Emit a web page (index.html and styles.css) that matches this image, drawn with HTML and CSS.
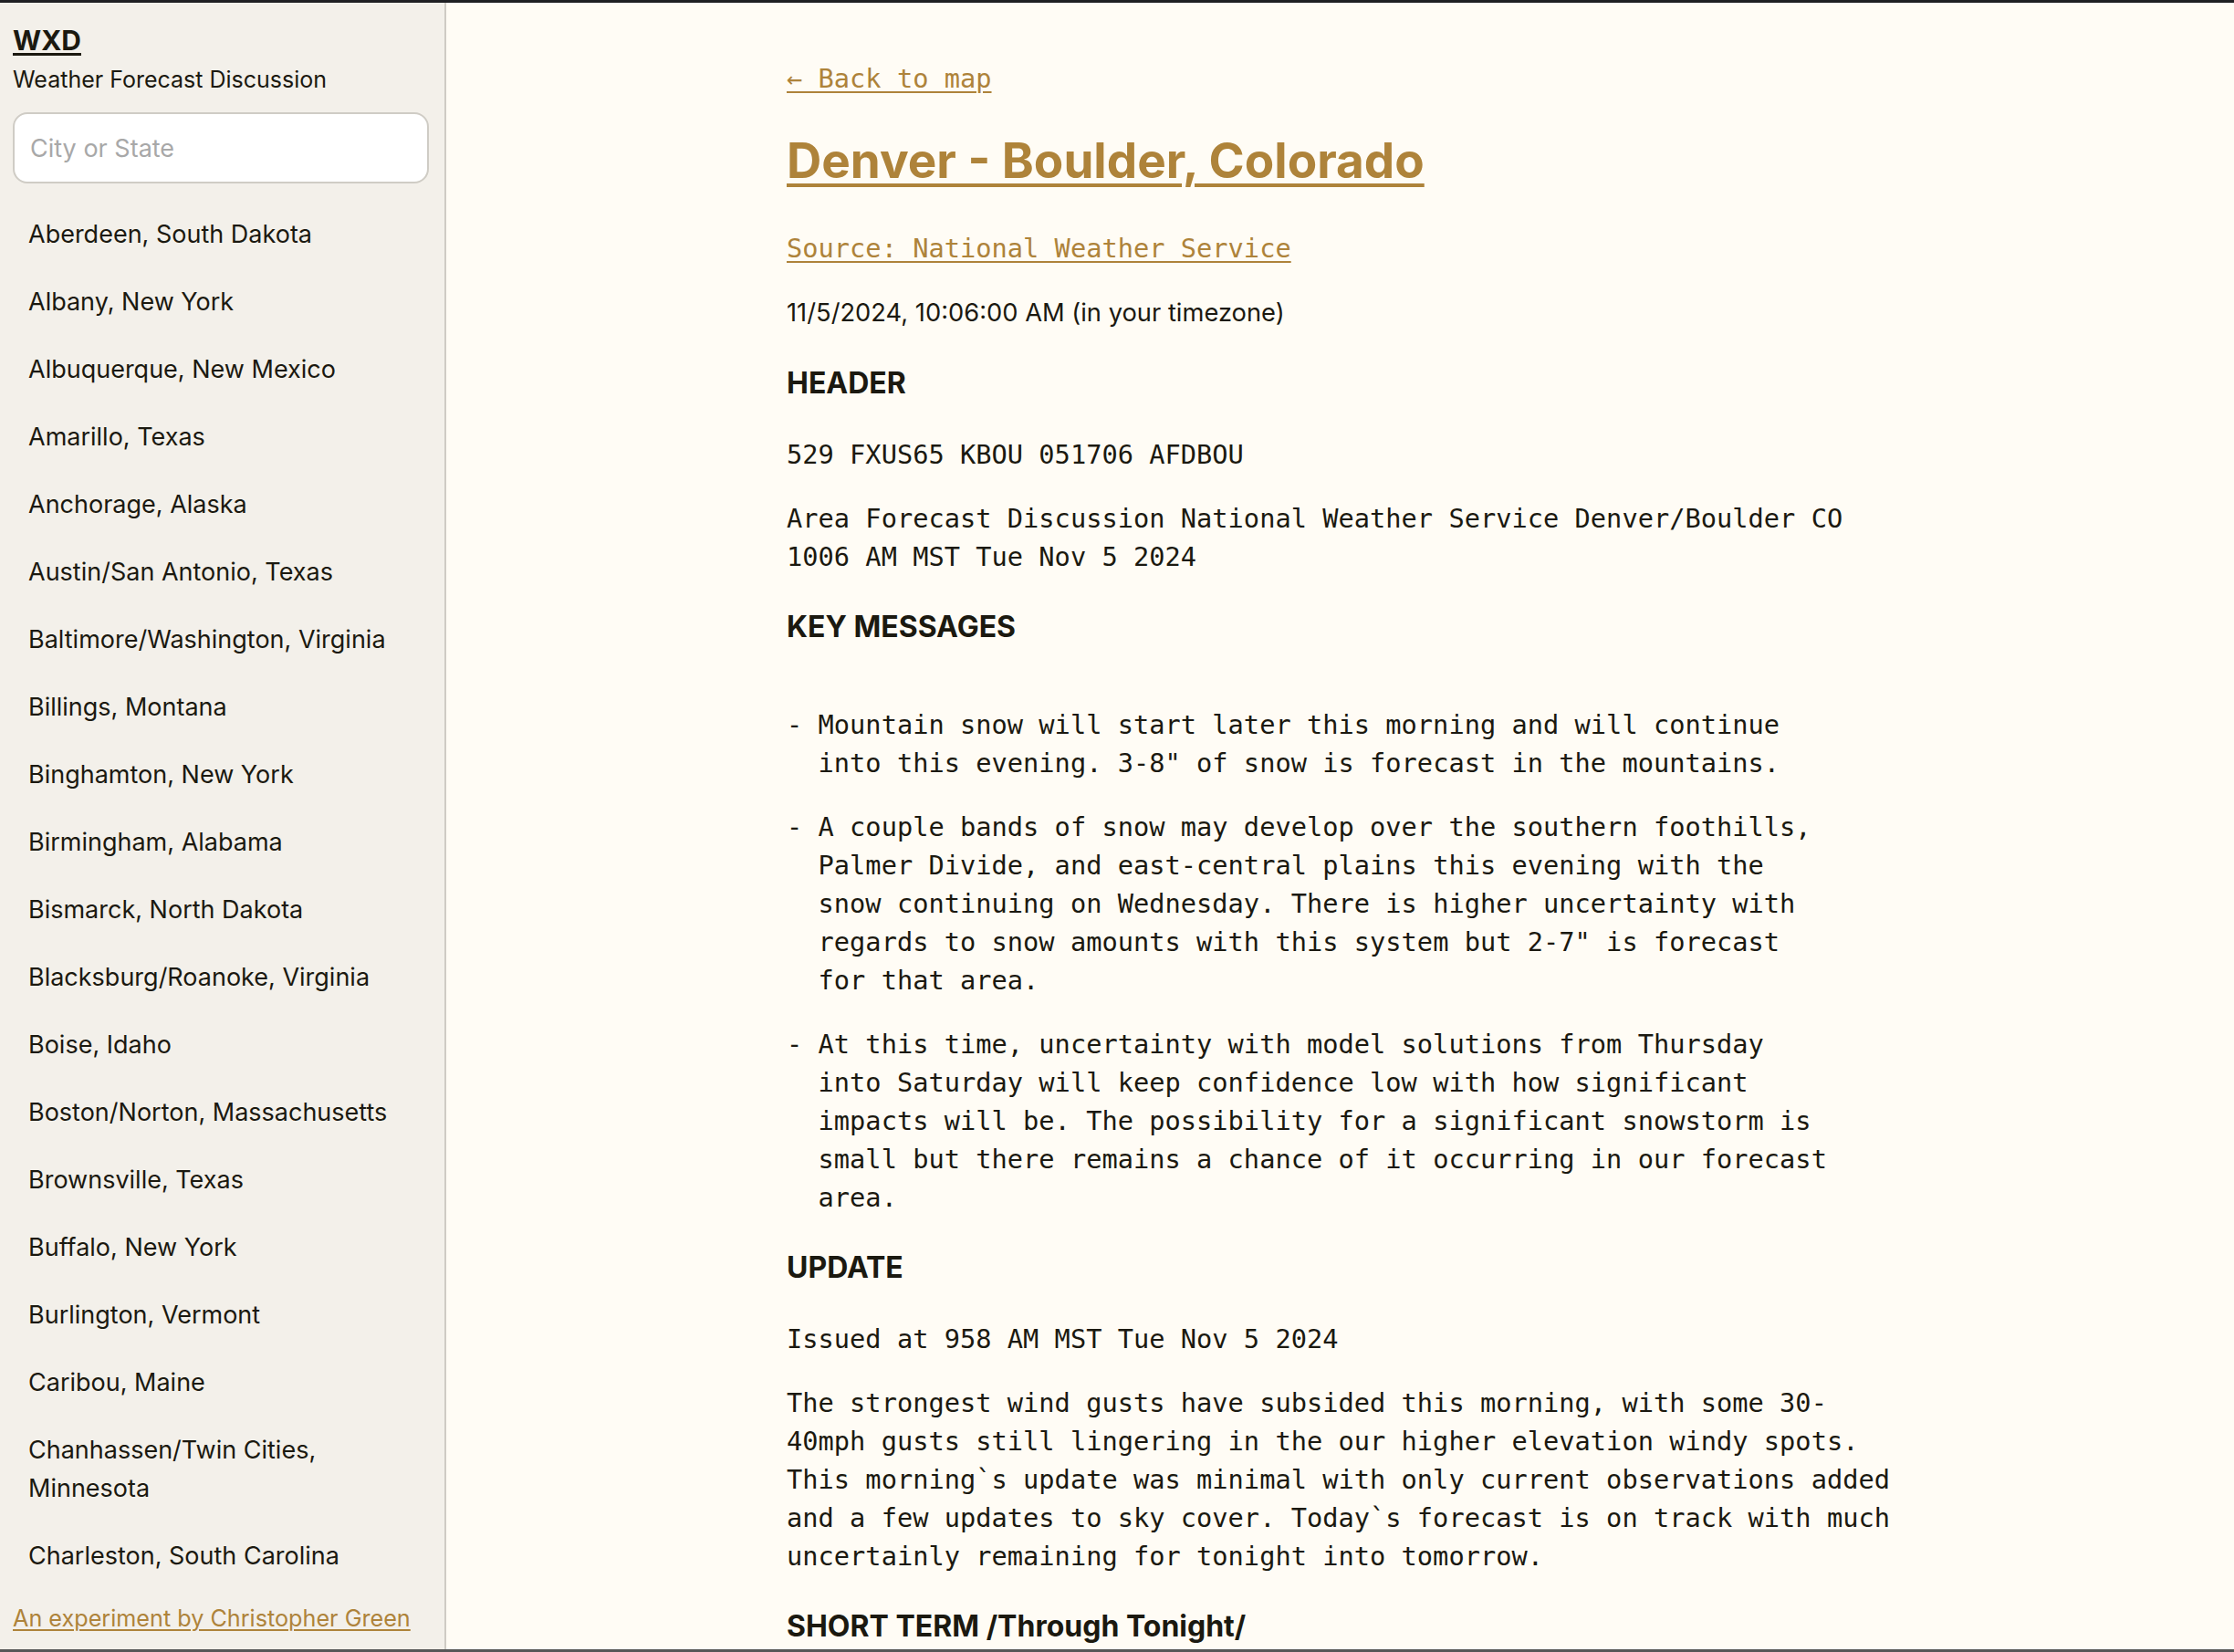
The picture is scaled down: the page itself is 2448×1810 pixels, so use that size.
FILE: index.html
```html
<!DOCTYPE html>
<html lang="en">
<head>
<meta charset="utf-8">
<title>WXD - Denver - Boulder, Colorado</title>
<link rel="stylesheet" href="styles.css">
</head>
<body>
<div class="frame">
  <aside class="sidebar">
    <div class="brand">
      <a class="logo" href="#">WXD</a>
      <div class="tagline">Weather Forecast Discussion</div>
    </div>
    <input class="search" type="text" placeholder="City or State">
    <ul class="offices">
      <li>Aberdeen, South Dakota</li>
      <li>Albany, New York</li>
      <li>Albuquerque, New Mexico</li>
      <li>Amarillo, Texas</li>
      <li>Anchorage, Alaska</li>
      <li>Austin/San Antonio, Texas</li>
      <li>Baltimore/Washington, Virginia</li>
      <li>Billings, Montana</li>
      <li>Binghamton, New York</li>
      <li>Birmingham, Alabama</li>
      <li>Bismarck, North Dakota</li>
      <li>Blacksburg/Roanoke, Virginia</li>
      <li>Boise, Idaho</li>
      <li>Boston/Norton, Massachusetts</li>
      <li>Brownsville, Texas</li>
      <li>Buffalo, New York</li>
      <li>Burlington, Vermont</li>
      <li>Caribou, Maine</li>
      <li>Chanhassen/Twin Cities, Minnesota</li>
      <li>Charleston, South Carolina</li>
    </ul>
    <div class="credit"><a href="#">An experiment by Christopher Green</a></div>
  </aside>
  <main class="main">
    <article class="content">
      <a class="back" href="#">← Back to map</a>
      <h1 class="title"><a href="#">Denver - Boulder, Colorado</a></h1>
      <a class="source" href="#">Source: National Weather Service</a>
      <p class="stamp">11/5/2024, 10:06:00 AM (in your timezone)</p>

      <h2>HEADER</h2>
      <p class="mono">529 FXUS65 KBOU 051706 AFDBOU</p>
      <p class="mono">Area Forecast Discussion National Weather Service Denver/Boulder CO 1006 AM MST Tue Nov 5 2024</p>

      <h2>KEY MESSAGES</h2>
      <p class="mono pre first">- Mountain snow will start later this morning and will continue
  into this evening. 3-8" of snow is forecast in the mountains.</p>
      <p class="mono pre">- A couple bands of snow may develop over the southern foothills,
  Palmer Divide, and east-central plains this evening with the
  snow continuing on Wednesday. There is higher uncertainty with
  regards to snow amounts with this system but 2-7" is forecast
  for that area.</p>
      <p class="mono pre">- At this time, uncertainty with model solutions from Thursday
  into Saturday will keep confidence low with how significant
  impacts will be. The possibility for a significant snowstorm is
  small but there remains a chance of it occurring in our forecast
  area.</p>

      <h2>UPDATE</h2>
      <p class="mono">Issued at 958 AM MST Tue Nov 5 2024</p>
      <p class="mono">The strongest wind gusts have subsided this morning, with some 30-40mph gusts still lingering in the our higher elevation windy spots. This morning`s update was minimal with only current observations added and a few updates to sky cover. Today`s forecast is on track with much uncertainly remaining for tonight into tomorrow.</p>

      <h2 class="last">SHORT TERM /Through Tonight/</h2>
    </article>
  </main>
</div>
</body>
</html>
```

FILE: styles.css
```css
html, body {
  margin: 0;
  padding: 0;
  height: 100%;
  overflow: hidden;
}

body {
  font-family: Inter, "Noto Sans", "Liberation Sans", sans-serif;
  color: #1b1910;
  background: #fffcf5;
}

.frame {
  display: flex;
  height: 1810px;
  box-sizing: border-box;
  border-top: 3px solid #1f2023;
  border-bottom: 3px solid #565656;
  overflow: hidden;
}

/* ---------- sidebar ---------- */
.sidebar {
  width: 489px;
  flex: 0 0 489px;
  box-sizing: border-box;
  display: flex;
  flex-direction: column;
  background: #f3f0ea;
  border-right: 2px solid #cfcbc4;
  padding: 23px 17px 0 14px;
}

.brand {
  display: flex;
  flex-direction: column;
}

.logo {
  font-size: 30px;
  font-weight: 700;
  line-height: 36px;
  color: #1b1910;
  text-decoration: underline;
  text-decoration-thickness: 3px;
  text-underline-offset: 3px;
  align-self: flex-start;
}

.tagline {
  font-size: 25px;
  line-height: 36px;
  margin-top: 7px;
}

.search {
  display: block;
  margin-top: 18px;
  box-sizing: border-box;
  width: 100%;
  height: 78px;
  border: 2px solid #cfccc5;
  border-radius: 16px;
  background: #ffffff;
  padding: 0 17px;
  font-family: Inter, "Noto Sans", sans-serif;
  font-size: 27px;
  color: #1b1910;
  outline: none;
}

.search::placeholder {
  color: #a8a8a8;
}

.offices {
  list-style: none;
  margin: 19px 0 0;
  padding: 0;
  flex: 1;
  min-height: 0;
  overflow: hidden;
}

.offices li {
  font-size: 27px;
  line-height: 42px;
  padding: 16px 17px;
}

.credit {
  padding: 14px 0 16px;
  font-size: 25.2px;
  line-height: 36px;
}

.credit a {
  color: #ae833a;
  text-decoration: underline;
  text-decoration-thickness: 2px;
  text-underline-offset: 3px;
}

/* ---------- main ---------- */
.main {
  flex: 1;
  min-width: 0;
  overflow: hidden;
  background: #fffcf5;
}

.content {
  width: 1213px;
  margin: 0 auto;
  padding-top: 62px;
}

.back,
.source {
  display: block;
  width: max-content;
  font-family: "DejaVu Sans Mono", "Liberation Mono", monospace;
  font-size: 28.7px;
  line-height: 42px;
  color: #ae833a;
  text-decoration: underline;
  text-decoration-thickness: 2px;
  text-underline-offset: 4px;
}

.title {
  margin: 38px 0 44px;
  font-size: 53px;
  line-height: 62px;
  font-weight: 700;
  letter-spacing: 0;
}

.title a {
  color: #ae833a;
  text-decoration: underline;
  text-decoration-thickness: 4px;
  text-underline-offset: 6px;
}

.stamp {
  margin: 29px 0 28px;
  font-size: 27.3px;
  line-height: 42px;
}

h2 {
  margin: 35px 0 36px;
  font-size: 32px;
  line-height: 42px;
  font-weight: 700;
}

h2.last {
  margin-bottom: 0;
}

.mono {
  margin: 28px 0;
  font-family: "DejaVu Sans Mono", "Liberation Mono", monospace;
  font-size: 28.7px;
  line-height: 42px;
}

.pre {
  white-space: pre-wrap;
}

.mono.first {
  margin-top: 65px;
}
```
